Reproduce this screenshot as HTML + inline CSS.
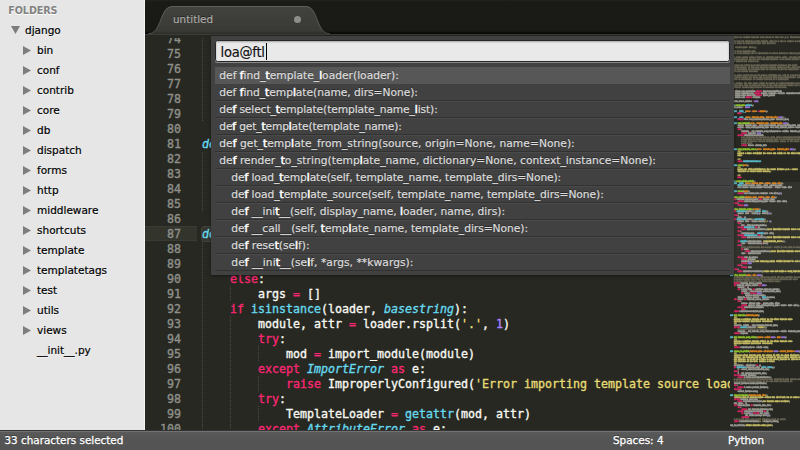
<!DOCTYPE html>
<html lang="en"><head><meta charset="utf-8"><title>untitled</title>
<style>
*{box-sizing:border-box;margin:0;padding:0}
html,body{width:800px;height:450px;overflow:hidden;background:#272822}
body{position:relative;font-family:"DejaVu Sans", "Liberation Sans", sans-serif;font-size:10.4px;}
#side{position:absolute;left:0;top:0;width:145px;height:430px;background:#e6e6e6;border-right:1px solid #f4f4f4;overflow:hidden}
#side .h{position:absolute;left:8.3px;top:2.5px;height:16px;line-height:16px;font-weight:bold;font-size:9.6px;letter-spacing:-.07px;color:#828282;text-shadow:0 1px 0 #fff}
#side .it{position:absolute;height:20px;line-height:20px;color:#000;font-size:10.5px;-webkit-text-stroke:.2px;white-space:pre;text-shadow:0 1px 0 rgba(255,255,255,.6)}
#side svg{position:absolute}
#tabs{position:absolute;left:145px;top:0;width:655px;height:35px;background:linear-gradient(#22231e 0,#1a1b16 2px,#191a15 31px,#0a0a08 33px,#0a0a08 34px,#3b3c37 34px);overflow:hidden}
#tabs .tab{position:absolute;left:0;top:0;width:200px;height:34px;background:linear-gradient(#42433e 0,#42433e 6px,#393a35 31px,#2f302b 33px);clip-path:path('M3.5 34 C10 34 12.5 28 15.3 21 C18 14.5 20 6 28 6 H160.5 C168 6 170 14.5 172.7 21 C175.5 28 178 34 184.5 34 Z')}
#tabs .lbl{position:absolute;left:28px;top:11px;height:16px;line-height:16px;color:#ababa7;font-size:10.4px;-webkit-text-stroke:.2px;text-shadow:0 -1px 0 rgba(0,0,0,.5)}
#tabs .dot{position:absolute;left:148.6px;top:15.6px;width:7.6px;height:7.6px;border-radius:50%;background:#8d8d8a}
#ed{position:absolute;left:145px;top:35px;width:655px;height:395px;background:#272822;overflow:hidden}
#lines{position:absolute;left:0;top:3px;width:655px;height:392px;overflow:hidden}

.ln{position:absolute;left:0;width:36px;text-align:right;height:15px;line-height:15px;color:#8f908a;font-family:"DejaVu Sans Mono", "Liberation Mono", monospace;font-size:11.63px;-webkit-text-stroke:0.35px}
.hl{position:absolute;left:0;width:52px;height:15px;background:#33342c;border-top:1px solid #3a3b33;border-bottom:1px solid #3a3b33}
.cl{position:absolute;left:57px;height:15px;line-height:15px;white-space:pre;color:#f8f8f2;font-family:"DejaVu Sans Mono", "Liberation Mono", monospace;font-size:11.63px;-webkit-text-stroke:0.35px}
.sel{position:absolute;background:#35362e;border:1px solid #414239;border-radius:3px;height:16px}
.g{position:absolute;width:1px;height:15px;background:repeating-linear-gradient(to bottom,rgba(255,255,255,.16) 0 1px,transparent 1px 2px)}
.g.o{background:repeating-linear-gradient(to bottom,transparent 0 1px,rgba(255,255,255,.16) 1px 2px)}
.com{color:#75715e}.str{color:#e6db74}.kw{color:#f92672}.st{color:#66d9ef}.fn{color:#a6e22e}.par{color:#fd971f}.con{color:#ae81ff}.bi{color:#66d9ef}.i{font-style:italic}
#mm{position:absolute;left:585px;top:0;width:70px;height:395px;overflow:hidden;background:#272822}
#mmv{position:absolute;left:0;top:147px;width:100%;height:92px;background:#32332d}
#mmt{position:absolute;left:0;top:0.9px;transform-origin:0 0;transform:scale(0.133333);font-family:"DejaVu Sans Mono", "Liberation Mono", monospace;font-size:17.5px;letter-spacing:-3.536px;line-height:15px;white-space:pre;color:#b4b4ac;font-weight:bold;-webkit-text-stroke:2px;opacity:0.8;text-shadow:0 2.2px 0,0 -2.2px 0}
#mmt div{height:15px}
#mmw{position:absolute;left:0;top:0;width:100%;height:100%;filter:blur(0px)}
#qp{position:absolute;left:211px;top:36px;width:523px;height:238.5px;background:#414141;box-shadow:0 1px 3px rgba(0,0,0,.4)}
#qp .in{position:absolute;left:4px;top:4px;width:515px;height:22px;background:#e9e9e9;border:1px solid #262626;border-radius:2.5px;box-shadow:inset 0 1px 2px rgba(0,0,0,.3),0 1px 0 rgba(255,255,255,.38);font-family:"DejaVu Sans Condensed","DejaVu Sans","Liberation Sans",sans-serif;font-size:14.6px;letter-spacing:-.27px;line-height:20px;height:22px;color:#111;padding-left:4.6px;padding-top:0;white-space:pre;-webkit-text-stroke:.15px}
#qp .q{display:inline-block;transform:translateY(.9px)}
#qp .cur{position:absolute;left:49.5px;top:1.5px;width:1.5px;height:17px;background:#000}
#qp .r{position:absolute;left:4px;width:515px;height:17px;line-height:16px;font-size:10.7px;color:#dcdcdc;white-space:pre;padding-left:4.3px;border-top:1px solid #4a4a4a;border-bottom:1px solid #323232;text-shadow:0 -1px 0 rgba(0,0,0,.35);-webkit-text-stroke:.2px}
#qp .r .sp{display:inline-block;width:12px;letter-spacing:0;overflow:hidden;vertical-align:top;font-style:normal}
#qp .r b{color:#fff;font-weight:normal;-webkit-text-stroke:.6px}
#qp .r.s{background:#575757;border-color:#575757}
#qp .r.n{border-top-color:#404040}
#sb{position:absolute;left:0;top:430px;width:800px;height:20px;background:linear-gradient(#333 0 1px,#727272 1px 2px,#5a5a5a 2px,#555 8px,#545454);color:#fff;font-size:10.4px;line-height:20px;-webkit-text-stroke:.3px;text-shadow:0 -1px 0 rgba(0,0,0,.55)}
#sb span{position:absolute;top:0;white-space:pre}
</style></head>
<body>
<div id="side">
<div class="h">FOLDERS</div>
<svg style="left:11px;top:26px" width="9" height="8" viewBox="0 0 9 8"><path d="M0 0H9L4.5 8Z" fill="#7d7d7d"/></svg><div class="it" style="left:25px;top:20px">django</div>
<svg style="left:23px;top:46px" width="8" height="9" viewBox="0 0 8 9"><path d="M0 0V9L8 4.5Z" fill="#7d7d7d"/></svg><div class="it" style="left:37px;top:40px">bin</div>
<svg style="left:23px;top:66px" width="8" height="9" viewBox="0 0 8 9"><path d="M0 0V9L8 4.5Z" fill="#7d7d7d"/></svg><div class="it" style="left:37px;top:60px">conf</div>
<svg style="left:23px;top:86px" width="8" height="9" viewBox="0 0 8 9"><path d="M0 0V9L8 4.5Z" fill="#7d7d7d"/></svg><div class="it" style="left:37px;top:80px">contrib</div>
<svg style="left:23px;top:106px" width="8" height="9" viewBox="0 0 8 9"><path d="M0 0V9L8 4.5Z" fill="#7d7d7d"/></svg><div class="it" style="left:37px;top:100px">core</div>
<svg style="left:23px;top:126px" width="8" height="9" viewBox="0 0 8 9"><path d="M0 0V9L8 4.5Z" fill="#7d7d7d"/></svg><div class="it" style="left:37px;top:120px">db</div>
<svg style="left:23px;top:146px" width="8" height="9" viewBox="0 0 8 9"><path d="M0 0V9L8 4.5Z" fill="#7d7d7d"/></svg><div class="it" style="left:37px;top:140px">dispatch</div>
<svg style="left:23px;top:166px" width="8" height="9" viewBox="0 0 8 9"><path d="M0 0V9L8 4.5Z" fill="#7d7d7d"/></svg><div class="it" style="left:37px;top:160px">forms</div>
<svg style="left:23px;top:186px" width="8" height="9" viewBox="0 0 8 9"><path d="M0 0V9L8 4.5Z" fill="#7d7d7d"/></svg><div class="it" style="left:37px;top:180px">http</div>
<svg style="left:23px;top:206px" width="8" height="9" viewBox="0 0 8 9"><path d="M0 0V9L8 4.5Z" fill="#7d7d7d"/></svg><div class="it" style="left:37px;top:200px">middleware</div>
<svg style="left:23px;top:226px" width="8" height="9" viewBox="0 0 8 9"><path d="M0 0V9L8 4.5Z" fill="#7d7d7d"/></svg><div class="it" style="left:37px;top:220px">shortcuts</div>
<svg style="left:23px;top:246px" width="8" height="9" viewBox="0 0 8 9"><path d="M0 0V9L8 4.5Z" fill="#7d7d7d"/></svg><div class="it" style="left:37px;top:240px">template</div>
<svg style="left:23px;top:266px" width="8" height="9" viewBox="0 0 8 9"><path d="M0 0V9L8 4.5Z" fill="#7d7d7d"/></svg><div class="it" style="left:37px;top:260px">templatetags</div>
<svg style="left:23px;top:286px" width="8" height="9" viewBox="0 0 8 9"><path d="M0 0V9L8 4.5Z" fill="#7d7d7d"/></svg><div class="it" style="left:37px;top:280px">test</div>
<svg style="left:23px;top:306px" width="8" height="9" viewBox="0 0 8 9"><path d="M0 0V9L8 4.5Z" fill="#7d7d7d"/></svg><div class="it" style="left:37px;top:300px">utils</div>
<svg style="left:23px;top:326px" width="8" height="9" viewBox="0 0 8 9"><path d="M0 0V9L8 4.5Z" fill="#7d7d7d"/></svg><div class="it" style="left:37px;top:320px">views</div>
<div class="it" style="left:37px;top:340px">__init__.py</div>
</div>
<div id="tabs"><div class="tab"></div><svg style="position:absolute;left:0;top:0" width="200" height="35" viewBox="0 0 200 35"><path d="M3.5 33.6 C10 33.6 12.5 28 15.3 21 C18 14.5 20 6.5 28 6.5 H160.5 C168 6.5 170 14.5 172.7 21 C175.5 28 178 33.6 184.5 33.6" fill="none" stroke="#6a6b66" stroke-opacity=".75" stroke-width="1"/></svg><div class="lbl">untitled</div><div class="dot"></div></div>
<div id="ed">
<div id="lines">
<div class="hl" style="top:188px"></div>
<div class="sel" style="left:56px;top:188px;width:233px"></div>
<div class="ln" style="top:-6px">74</div><div class="g o" style="left:57px;top:-7px"></div><div class="cl" style="top:-6px">    <span class="st i">def</span> <span class="bi">__init__</span>(<span class="par i">self</span>, <span class="par i">display_name</span>, <span class="par i">loader</span>, <span class="par i">name</span>, <span class="par i">dirs</span>):</div>
<div class="ln" style="top:9px">75</div><div class="g" style="left:57px;top:8px"></div><div class="g" style="left:85px;top:8px"></div><div class="cl" style="top:9px">        <span class="bi">super</span>(LoaderOrigin, self).__init__(display_name)</div>
<div class="ln" style="top:24px">76</div><div class="g o" style="left:57px;top:23px"></div><div class="g o" style="left:85px;top:23px"></div><div class="cl" style="top:24px">        self.loader, self.loadname, self.dirs <span class="kw">=</span> loader, name, dirs</div>
<div class="ln" style="top:39px">77</div><div class="g" style="left:57px;top:38px"></div>
<div class="ln" style="top:54px">78</div><div class="g o" style="left:57px;top:53px"></div><div class="cl" style="top:54px">    <span class="st i">def</span> <span class="fn">reload</span>(<span class="par i">self</span>):</div>
<div class="ln" style="top:69px">79</div><div class="g" style="left:57px;top:68px"></div><div class="g" style="left:85px;top:68px"></div><div class="cl" style="top:69px">        <span class="kw">return</span> self.loader(self.loadname, self.dirs)[<span class="con">0</span>]</div>
<div class="ln" style="top:84px">80</div>
<div class="ln" style="top:99px">81</div><div class="cl" style="top:99px"><span class="st i">def</span> <span class="fn">make_origin</span>(<span class="par i">display_name</span>, <span class="par i">loader</span>, <span class="par i">name</span>, <span class="par i">dirs</span>):</div>
<div class="ln" style="top:114px">82</div><div class="g o" style="left:57px;top:113px"></div><div class="cl" style="top:114px">    <span class="kw">if</span> settings.TEMPLATE_DEBUG <span class="kw">and</span> display_name:</div>
<div class="ln" style="top:129px">83</div><div class="g" style="left:57px;top:128px"></div><div class="g" style="left:85px;top:128px"></div><div class="cl" style="top:129px">        <span class="kw">return</span> LoaderOrigin(display_name, loader, name, dirs)</div>
<div class="ln" style="top:144px">84</div><div class="g o" style="left:57px;top:143px"></div><div class="cl" style="top:144px">    <span class="kw">else</span>:</div>
<div class="ln" style="top:159px">85</div><div class="g" style="left:57px;top:158px"></div><div class="g" style="left:85px;top:158px"></div><div class="cl" style="top:159px">        <span class="kw">return</span> <span class="con">None</span></div>
<div class="ln" style="top:174px">86</div>
<div class="ln" style="top:189px">87</div><div class="cl" style="top:189px"><span class="st i">def</span> <span class="fn">find_template_loader</span>(<span class="par i">loader</span>):</div>
<div class="ln" style="top:204px">88</div><div class="g o" style="left:57px;top:203px"></div><div class="cl" style="top:204px">    <span class="kw">if</span> <span class="bi">isinstance</span>(loader, (<span class="bi i">tuple</span>, <span class="bi i">list</span>)):</div>
<div class="ln" style="top:219px">89</div><div class="g" style="left:57px;top:218px"></div><div class="g" style="left:85px;top:218px"></div><div class="cl" style="top:219px">        loader, args <span class="kw">=</span> loader[<span class="con">0</span>], loader[<span class="con">1</span>:]</div>
<div class="ln" style="top:234px">90</div><div class="g o" style="left:57px;top:233px"></div><div class="cl" style="top:234px">    <span class="kw">else</span>:</div>
<div class="ln" style="top:249px">91</div><div class="g" style="left:57px;top:248px"></div><div class="g" style="left:85px;top:248px"></div><div class="cl" style="top:249px">        args <span class="kw">=</span> []</div>
<div class="ln" style="top:264px">92</div><div class="g o" style="left:57px;top:263px"></div><div class="cl" style="top:264px">    <span class="kw">if</span> <span class="bi">isinstance</span>(loader, <span class="bi i">basestring</span>):</div>
<div class="ln" style="top:279px">93</div><div class="g" style="left:57px;top:278px"></div><div class="g" style="left:85px;top:278px"></div><div class="cl" style="top:279px">        module, attr <span class="kw">=</span> loader.rsplit(<span class="str">'.'</span>, <span class="con">1</span>)</div>
<div class="ln" style="top:294px">94</div><div class="g o" style="left:57px;top:293px"></div><div class="g o" style="left:85px;top:293px"></div><div class="cl" style="top:294px">        <span class="kw">try</span>:</div>
<div class="ln" style="top:309px">95</div><div class="g" style="left:57px;top:308px"></div><div class="g" style="left:85px;top:308px"></div><div class="g" style="left:113px;top:308px"></div><div class="cl" style="top:309px">            mod <span class="kw">=</span> import_module(module)</div>
<div class="ln" style="top:324px">96</div><div class="g o" style="left:57px;top:323px"></div><div class="g o" style="left:85px;top:323px"></div><div class="cl" style="top:324px">        <span class="kw">except</span> <span class="bi i">ImportError</span> <span class="kw">as</span> e:</div>
<div class="ln" style="top:339px">97</div><div class="g" style="left:57px;top:338px"></div><div class="g" style="left:85px;top:338px"></div><div class="g" style="left:113px;top:338px"></div><div class="cl" style="top:339px">            <span class="kw">raise</span> ImproperlyConfigured(<span class="str">'Error importing template source loader %s: "%s"'</span> <span class="kw">%</span> (loader, e))</div>
<div class="ln" style="top:354px">98</div><div class="g o" style="left:57px;top:353px"></div><div class="g o" style="left:85px;top:353px"></div><div class="cl" style="top:354px">        <span class="kw">try</span>:</div>
<div class="ln" style="top:369px">99</div><div class="g" style="left:57px;top:368px"></div><div class="g" style="left:85px;top:368px"></div><div class="g" style="left:113px;top:368px"></div><div class="cl" style="top:369px">            TemplateLoader <span class="kw">=</span> <span class="bi">getattr</span>(mod, attr)</div>
<div class="ln" style="top:384px">100</div><div class="g o" style="left:57px;top:383px"></div><div class="g o" style="left:85px;top:383px"></div><div class="cl" style="top:384px">        <span class="kw">except</span> <span class="bi i">AttributeError</span> <span class="kw">as</span> e:</div>
</div>
<div id="mm"><div id="mmv"></div><div id="mmw"><div id="mmt"><div><span class="com"># Wrapper for loading templates from storage of some sort (e.g. filesystem, database).</span></div><div><span class="com">#</span></div><div><span class="com"># This uses the TEMPLATE_LOADERS setting, which is a list of loaders to use.</span></div><div><span class="com"># Each loader is expected to have this interface:</span></div><div><span class="com">#</span></div><div><span class="com">#    callable(name, dirs=[])</span></div><div><span class="com">#</span></div><div><span class="com"># name is the template name.</span></div><div><span class="com"># dirs is an optional list of directories to search instead of TEMPLATE_DIRS.</span></div><div><span class="com">#</span></div><div><span class="com"># The loader should return a tuple of (template_source, path). The path returned</span></div><div><span class="com"># might be shown to the user for debugging purposes, so it should identify where</span></div><div><span class="com"># the template was loaded from.</span></div><div><span class="com">#</span></div><div><span class="com"># A loader may return an already-compiled template instead of the actual</span></div><div><span class="com"># template source. In that case the path returned should be None, since the</span></div><div><span class="com"># path information is associated with the template during the compilation,</span></div><div><span class="com"># which has already been done.</span></div><div><span class="com">#</span></div><div><span class="com"># Each loader should have an "is_usable" attribute set. This is a boolean that</span></div><div><span class="com"># specifies whether the loader can be used in this Python installation. Each</span></div><div><span class="com"># loader is responsible for setting this when it's initialized.</span></div><div><span class="com">#</span></div><div><span class="com"># For example, the eggs loader (which is capable of loading templates from</span></div><div><span class="com"># Python eggs) sets is_usable to False if the "pkg_resources" module isn't</span></div><div><span class="com"># installed, because pkg_resources is necessary to read eggs.</span></div><div></div><div><span class="kw">from</span> django.core.exceptions <span class="kw">import</span> ImproperlyConfigured</div><div><span class="kw">from</span> django.template.base <span class="kw">import</span> Origin, Template, Context, TemplateDoesNotExist, add_to_builtins</div><div><span class="kw">from</span> django.utils.importlib <span class="kw">import</span> import_module</div><div><span class="kw">from</span> django.conf <span class="kw">import</span> settings</div><div></div><div>template_source_loaders <span class="kw">=</span> <span class="con">None</span></div><div></div><div><span class="st i">class</span> <span class="fn">BaseLoader</span>(<span class="bi i">object</span>):</div><div>    is_usable <span class="kw">=</span> <span class="con">False</span></div><div></div><div>    <span class="st i">def</span> <span class="bi">__init__</span>(<span class="par i">self</span>, <span class="kw">*</span><span class="par i">args</span>, <span class="kw">**</span><span class="par i">kwargs</span>):</div><div>        <span class="kw">pass</span></div><div></div><div>    <span class="st i">def</span> <span class="bi">__call__</span>(<span class="par i">self</span>, <span class="par i">template_name</span>, <span class="par i">template_dirs</span><span class="kw">=</span><span class="con">None</span>):</div><div>        <span class="kw">return</span> self.load_template(template_name, template_dirs)</div><div></div><div>    <span class="st i">def</span> <span class="fn">load_template</span>(<span class="par i">self</span>, <span class="par i">template_name</span>, <span class="par i">template_dirs</span><span class="kw">=</span><span class="con">None</span>):</div><div>        source, display_name <span class="kw">=</span> self.load_template_source(template_name, template_dirs)</div><div>        origin <span class="kw">=</span> make_origin(display_name, self.load_template_source, template_name, template_dirs)</div><div>        <span class="kw">try</span>:</div><div>            template <span class="kw">=</span> get_template_from_string(source, origin, template_name)</div><div>            <span class="kw">return</span> template, <span class="con">None</span></div><div>        <span class="kw">except</span> TemplateDoesNotExist:</div><div>            <span class="com"># If compiling the template we found raises TemplateDoesNotExist, back off to</span></div><div>            <span class="com"># returning the source and display name for the template we were asked to load.</span></div><div>            <span class="com"># This allows for correct identification (later) of the actual template that does</span></div><div>            <span class="com"># not exist.</span></div><div>            <span class="kw">return</span> source, display_name</div><div></div><div>    <span class="st i">def</span> <span class="fn">load_template_source</span>(<span class="par i">self</span>, <span class="par i">template_name</span>, <span class="par i">template_dirs</span><span class="kw">=</span><span class="con">None</span>):</div><div><span class="str">        """</span></div><div><span class="str">        Returns a tuple containing the source and origin for the given template</span></div><div><span class="str">        name.</span></div><div><span class="str"></span></div><div><span class="str">        """</span></div><div>        <span class="kw">raise</span> <span class="bi i">NotImplementedError</span></div><div></div><div>    <span class="st i">def</span> <span class="fn">reset</span>(<span class="par i">self</span>):</div><div><span class="str">        """</span></div><div><span class="str">        Resets any state maintained by the loader instance (e.g., cached</span></div><div><span class="str">        templates or cached loader modules).</span></div><div><span class="str"></span></div><div><span class="str">        """</span></div><div>        <span class="kw">pass</span></div><div></div><div><span class="st i">class</span> <span class="fn">LoaderOrigin</span>(<span class="fn i">Origin</span>):</div><div>    <span class="st i">def</span> <span class="bi">__init__</span>(<span class="par i">self</span>, <span class="par i">display_name</span>, <span class="par i">loader</span>, <span class="par i">name</span>, <span class="par i">dirs</span>):</div><div>        <span class="bi">super</span>(LoaderOrigin, self).__init__(display_name)</div><div>        self.loader, self.loadname, self.dirs <span class="kw">=</span> loader, name, dirs</div><div></div><div>    <span class="st i">def</span> <span class="fn">reload</span>(<span class="par i">self</span>):</div><div>        <span class="kw">return</span> self.loader(self.loadname, self.dirs)[<span class="con">0</span>]</div><div></div><div><span class="st i">def</span> <span class="fn">make_origin</span>(<span class="par i">display_name</span>, <span class="par i">loader</span>, <span class="par i">name</span>, <span class="par i">dirs</span>):</div><div>    <span class="kw">if</span> settings.TEMPLATE_DEBUG <span class="kw">and</span> display_name:</div><div>        <span class="kw">return</span> LoaderOrigin(display_name, loader, name, dirs)</div><div>    <span class="kw">else</span>:</div><div>        <span class="kw">return</span> <span class="con">None</span></div><div></div><div><span class="st i">def</span> <span class="fn">find_template_loader</span>(<span class="par i">loader</span>):</div><div>    <span class="kw">if</span> <span class="bi">isinstance</span>(loader, (<span class="bi i">tuple</span>, <span class="bi i">list</span>)):</div><div>        loader, args <span class="kw">=</span> loader[<span class="con">0</span>], loader[<span class="con">1</span>:]</div><div>    <span class="kw">else</span>:</div><div>        args <span class="kw">=</span> []</div><div>    <span class="kw">if</span> <span class="bi">isinstance</span>(loader, <span class="bi i">basestring</span>):</div><div>        module, attr <span class="kw">=</span> loader.rsplit(<span class="str">'.'</span>, <span class="con">1</span>)</div><div>        <span class="kw">try</span>:</div><div>            mod <span class="kw">=</span> import_module(module)</div><div>        <span class="kw">except</span> <span class="bi i">ImportError</span> <span class="kw">as</span> e:</div><div>            <span class="kw">raise</span> ImproperlyConfigured(<span class="str">'Error importing template source loader %s: "%s"'</span> <span class="kw">%</span> (loader, e))</div><div>        <span class="kw">try</span>:</div><div>            TemplateLoader <span class="kw">=</span> <span class="bi">getattr</span>(mod, attr)</div><div>        <span class="kw">except</span> <span class="bi i">AttributeError</span> <span class="kw">as</span> e:</div><div>            <span class="kw">raise</span> ImproperlyConfigured(<span class="str">'Error importing template source loader %s: "%s"'</span> <span class="kw">%</span> (loader, e))</div><div></div><div>        <span class="kw">if</span> <span class="bi">hasattr</span>(TemplateLoader, <span class="str">'load_template_source'</span>):</div><div>            func <span class="kw">=</span> TemplateLoader(<span class="kw">*</span>args)</div><div>        <span class="kw">else</span>:</div><div>            <span class="com"># Try loading module the old way - string is full path to callable</span></div><div>            <span class="kw">if</span> args:</div><div>                <span class="kw">raise</span> ImproperlyConfigured(<span class="str">"Error importing template source loader %s - can't pass arguments to function-based loader."</span> <span class="kw">%</span> loader)</div><div>            func <span class="kw">=</span> TemplateLoader</div><div></div><div>        <span class="kw">if</span> <span class="kw">not</span> func.is_usable:</div><div>            <span class="kw">import</span> warnings</div><div>            warnings.warn(<span class="str">"Your TEMPLATE_LOADERS setting includes %r, but your Python installation doesn't support that type of template loading. Consider removing that line from TEMPLATE_LOADERS."</span> <span class="kw">%</span> loader)</div><div>            <span class="kw">return</span> <span class="con">None</span></div><div>        <span class="kw">else</span>:</div><div>            <span class="kw">return</span> func</div><div>    <span class="kw">else</span>:</div><div>        <span class="kw">raise</span> ImproperlyConfigured(<span class="str">'Loader does not define a "load_template" callable template source loader'</span>)</div><div></div><div><span class="st i">def</span> <span class="fn">find_template</span>(<span class="par i">name</span>, <span class="par i">dirs</span><span class="kw">=</span><span class="con">None</span>):</div><div>    <span class="com"># Calculate template_source_loaders the first time the function is executed</span></div><div>    <span class="com"># because putting this logic in the module-level namespace may cause</span></div><div>    <span class="com"># circular import errors. See Django ticket #1292.</span></div><div>    <span class="kw">global</span> template_source_loaders</div><div>    <span class="kw">if</span> template_source_loaders <span class="kw">is</span> <span class="con">None</span>:</div><div>        loaders <span class="kw">=</span> []</div><div>        <span class="kw">for</span> loader_name <span class="kw">in</span> settings.TEMPLATE_LOADERS:</div><div>            loader <span class="kw">=</span> find_template_loader(loader_name)</div><div>            <span class="kw">if</span> loader <span class="kw">is</span> <span class="kw">not</span> <span class="con">None</span>:</div><div>                loaders.append(loader)</div><div>        template_source_loaders <span class="kw">=</span> <span class="bi">tuple</span>(loaders)</div><div>    <span class="kw">for</span> loader <span class="kw">in</span> template_source_loaders:</div><div>        <span class="kw">try</span>:</div><div>            source, display_name <span class="kw">=</span> loader(name, dirs)</div><div>            <span class="kw">return</span> (source, make_origin(display_name, loader, name, dirs))</div><div>        <span class="kw">except</span> TemplateDoesNotExist:</div><div>            <span class="kw">pass</span></div><div>    <span class="kw">raise</span> TemplateDoesNotExist(name)</div><div></div><div><span class="st i">def</span> <span class="fn">get_template</span>(<span class="par i">template_name</span>):</div><div><span class="str">    """</span></div><div><span class="str">    Returns a compiled Template object for the given template name,</span></div><div><span class="str">    handling template inheritance recursively.</span></div><div><span class="str">    """</span></div><div>    template, origin <span class="kw">=</span> find_template(template_name)</div><div>    <span class="kw">if</span> <span class="kw">not</span> <span class="bi">hasattr</span>(template, <span class="str">'render'</span>):</div><div>        <span class="com"># template needs to be compiled</span></div><div>        template <span class="kw">=</span> get_template_from_string(template, origin, template_name)</div><div>    <span class="kw">return</span> template</div><div></div><div><span class="st i">def</span> <span class="fn">get_template_from_string</span>(<span class="par i">source</span>, <span class="par i">origin</span><span class="kw">=</span><span class="con">None</span>, <span class="par i">name</span><span class="kw">=</span><span class="con">None</span>):</div><div><span class="str">    """</span></div><div><span class="str">    Returns a compiled Template object for the given template code,</span></div><div><span class="str">    handling template inheritance recursively.</span></div><div><span class="str">    """</span></div><div>    <span class="kw">return</span> Template(source, origin, name)</div><div></div><div><span class="st i">def</span> <span class="fn">render_to_string</span>(<span class="par i">template_name</span>, <span class="par i">dictionary</span><span class="kw">=</span><span class="con">None</span>, <span class="par i">context_instance</span><span class="kw">=</span><span class="con">None</span>):</div><div><span class="str">    """</span></div><div><span class="str">    Loads the given template_name and renders it with the given dictionary as</span></div><div><span class="str">    context. The template_name may be a string to load a single template using</span></div><div><span class="str">    get_template, or it may be a tuple to use select_template to find one of</span></div><div><span class="str">    the templates in the list. Returns a string.</span></div><div><span class="str">    """</span></div><div>    dictionary <span class="kw">=</span> dictionary <span class="kw">or</span> {}</div><div>    <span class="kw">if</span> <span class="bi">isinstance</span>(template_name, (<span class="bi i">list</span>, <span class="bi i">tuple</span>)):</div><div>        t <span class="kw">=</span> select_template(template_name)</div><div>    <span class="kw">else</span>:</div><div>        t <span class="kw">=</span> get_template(template_name)</div><div>    <span class="kw">if</span> <span class="kw">not</span> context_instance:</div><div>        <span class="kw">return</span> t.render(Context(dictionary))</div><div>    <span class="com"># Add the dictionary to the context stack, ensuring it gets removed again</span></div><div>    <span class="com"># to keep the context_instance in the same state it started in.</span></div><div>    context_instance.update(dictionary)</div><div>    <span class="kw">try</span>:</div><div>        <span class="kw">return</span> t.render(context_instance)</div><div>    <span class="kw">finally</span>:</div><div>        context_instance.pop()</div><div></div><div><span class="st i">def</span> <span class="fn">select_template</span>(<span class="par i">template_name_list</span>):</div><div>    <span class="str">"Given a list of template names, returns the first that can be loaded."</span></div><div>    <span class="kw">if</span> <span class="kw">not</span> template_name_list:</div><div>        <span class="kw">raise</span> TemplateDoesNotExist(<span class="str">"No template names provided"</span>)</div><div>    not_found <span class="kw">=</span> []</div><div>    <span class="kw">for</span> template_name <span class="kw">in</span> template_name_list:</div><div>        <span class="kw">try</span>:</div><div>            <span class="kw">return</span> get_template(template_name)</div><div>        <span class="kw">except</span> TemplateDoesNotExist <span class="kw">as</span> e:</div><div>            <span class="kw">if</span> e.args[<span class="con">0</span>] <span class="kw">not</span> <span class="kw">in</span> not_found:</div><div>                not_found.append(e.args[<span class="con">0</span>])</div><div>            <span class="kw">continue</span></div><div>    <span class="com"># If we get here, none of the templates could be loaded</span></div><div>    <span class="kw">raise</span> TemplateDoesNotExist(<span class="str">', '</span>.join(not_found))</div><div></div><div>add_to_builtins(<span class="str">'django.template.loader_tags'</span>)</div></div></div></div>
</div>
<div id="qp">
<div class="in"><span class="q">loa@ftl</span><span class="cur"></span></div>
<div class="r s" style="top:31px;letter-spacing:0.003px">def <b>f</b>ind_<b>t</b>emplate_<b>l</b>oader(loader):</div>
<div class="r n" style="top:48px;letter-spacing:-0.040px">def <b>f</b>ind_<b>t</b>emp<b>l</b>ate(name, dirs=None):</div>
<div class="r" style="top:65px;letter-spacing:-0.111px">de<b>f</b> select_<b>t</b>emplate(template_name_<b>l</b>ist):</div>
<div class="r" style="top:82px;letter-spacing:-0.160px">de<b>f</b> get_<b>t</b>emp<b>l</b>ate(template_name):</div>
<div class="r" style="top:99px;letter-spacing:0.034px">de<b>f</b> get_<b>t</b>emp<b>l</b>ate_from_string(source, origin=None, name=None):</div>
<div class="r" style="top:116px;letter-spacing:0.018px">de<b>f</b> render_<b>t</b>o_string(temp<b>l</b>ate_name, dictionary=None, context_instance=None):</div>
<div class="r" style="top:133px;letter-spacing:-0.095px"><i class="sp">    </i>de<b>f</b> load_<b>t</b>emp<b>l</b>ate(self, template_name, template_dirs=None):</div>
<div class="r" style="top:150px;letter-spacing:-0.059px"><i class="sp">    </i>de<b>f</b> load_<b>t</b>emp<b>l</b>ate_source(self, template_name, template_dirs=None):</div>
<div class="r" style="top:167px;letter-spacing:-0.011px"><i class="sp">    </i>de<b>f</b> __ini<b>t</b>__(self, display_name, <b>l</b>oader, name, dirs):</div>
<div class="r" style="top:184px;letter-spacing:-0.037px"><i class="sp">    </i>de<b>f</b> __call__(self, <b>t</b>emp<b>l</b>ate_name, template_dirs=None):</div>
<div class="r" style="top:201px;letter-spacing:-0.011px"><i class="sp">    </i>de<b>f</b> rese<b>t</b>(se<b>l</b>f):</div>
<div class="r" style="top:218px;letter-spacing:0.047px"><i class="sp">    </i>de<b>f</b> __ini<b>t</b>__(se<b>l</b>f, *args, **kwargs):</div>
</div>
<div id="sb"><span style="left:4.5px">33 characters selected</span><span style="left:613px">Spaces: 4</span><span style="left:728px">Python</span></div>
</body></html>
